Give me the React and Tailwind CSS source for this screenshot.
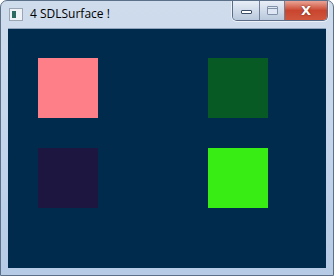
import React from "react";

function CaptionButtons() {
  return (
    <div className="flex h-[20px] items-stretch self-start overflow-hidden rounded-b-[5px] border border-t-0 border-[#5a6c86] shadow-[0_0_0_1px_rgba(255,255,255,0.6)]">
      <div className="flex w-[27px] items-center justify-center border-r border-[#6f7f98] bg-gradient-to-b from-[#e8eef7] to-[#b9c8dc]">
        <div className="mt-[3px] h-[4px] w-[11px] rounded-[1px] border border-[#3d4d66] bg-white" />
      </div>
      <div className="flex w-[25px] items-center justify-center border-r border-[#6f7f98] bg-gradient-to-b from-[#e8eef7] to-[#b9c8dc]">
        <div className="h-[9px] w-[11px] rounded-[1px] border border-[#8191a8] bg-[#dde6f2]">
          <div className="mt-[1px] h-[1px] w-full bg-[#8191a8]" />
        </div>
      </div>
      <div className="flex w-[42px] items-center justify-center bg-gradient-to-b from-[#e9a395] via-[#c9452f] to-[#d0563c]">
        <span className="text-[13px] font-bold leading-none text-white [text-shadow:0_0_2px_#5a1a10] [font-family:'DejaVu_Sans',sans-serif]">
          X
        </span>
      </div>
    </div>
  );
}

function Square({ color }) {
  return <div className={`h-[60px] w-[60px] ${color}`} />;
}

export default function App() {
  return (
    <div className="h-[276px] w-[334px] overflow-hidden rounded-t-[7px] border border-[#5d7089] bg-gradient-to-b from-[#cfdcec] via-[#c5d6ec] to-[#b6cbe6]">
      <div className="flex h-[27px] items-start pl-[8px] pr-[5px]">
        <div className="mt-[7px] flex h-[13px] w-[14px] items-center border border-[#9aa6b3] bg-[#eef2f6] pl-[2px]">
          <div className="h-[7px] w-[4px] bg-[#2d6b62]" />
        </div>
        <span className="ml-[7px] mt-[5px] text-[12px] leading-[16px] text-black [font-family:'Open_Sans',sans-serif]">
          4 SDLSurface !
        </span>
        <div className="flex-1" />
        <CaptionButtons />
      </div>
      <div className="mx-[7px] h-[240px] w-[318px] border-t border-[#8fa3bd] bg-[#002b4c]">
        <div className="grid grid-cols-[60px_60px] gap-x-[110px] gap-y-[30px] pl-[30px] pt-[29px]">
          <Square color="bg-[#ff7f88]" />
          <Square color="bg-[#075a24]" />
          <Square color="bg-[#1d1640]" />
          <Square color="bg-[#38ed14]" />
        </div>
      </div>
    </div>
  );
}
